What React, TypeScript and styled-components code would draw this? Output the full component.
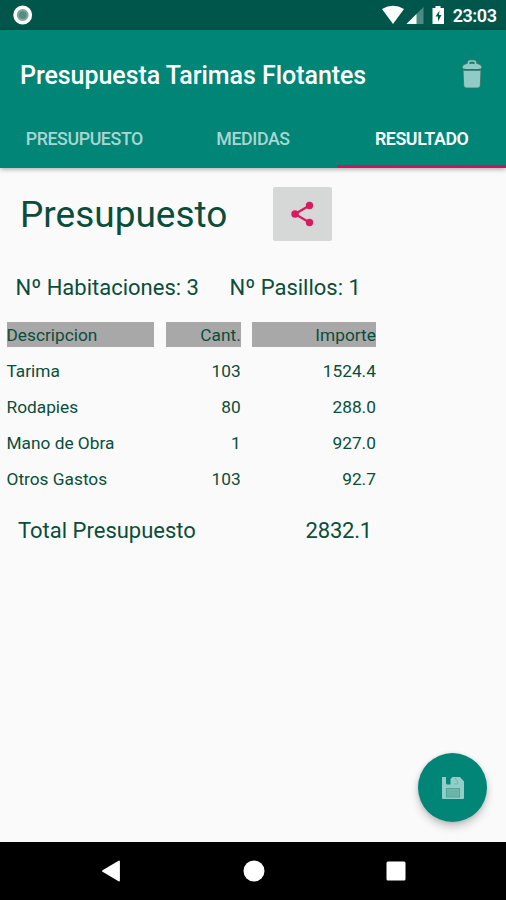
import React from "react";
import styled, { createGlobalStyle } from "styled-components";

const GlobalStyle = createGlobalStyle`
  * { box-sizing: border-box; }
  body { margin: 0; background: #fafafa; font-family: Roboto, "Noto Sans", sans-serif; }
`;

const Screen = styled.div`
  width: 506px;
  height: 900px;
  display: flex;
  flex-direction: column;
  overflow: hidden;
  background: #fafafa;
  color: #0b4d3b;
`;

const StatusBar = styled.div`
  height: 30px;
  flex: none;
  display: flex;
  align-items: center;
  justify-content: space-between;
  padding: 0 9.5px 0 13px;
  background: #00564b;
`;

const StatusIcons = styled.div`
  display: flex;
  align-items: center;
`;

const Clock = styled.span`
  color: #fff;
  font-size: 18px;
  font-weight: 600;
  letter-spacing: -0.45px;
  line-height: 30px;
  padding-top: 2px;
  margin-left: 6px;
`;

const Header = styled.header`
  height: 138px;
  flex: none;
  position: relative;
  background: #008577;
  box-shadow: 0 1px 5px rgba(0, 0, 0, 0.36);
`;

const Toolbar = styled.div`
  height: 80px;
  display: flex;
  align-items: center;
  justify-content: space-between;
  padding: 10px 23px 3px 20px;
`;

const AppTitle = styled.h1`
  margin: 0;
  padding-top: 5px;
  color: #fff;
  font-size: 25px;
  font-weight: 500;
  letter-spacing: -0.05px;
  line-height: 30px;
`;

const Tabs = styled.nav`
  height: 58px;
  display: grid;
  grid-template-columns: repeat(3, 1fr);
`;

const Tab = styled.div<{ $active?: boolean }>`
  display: flex;
  align-items: center;
  justify-content: center;
  font-size: 17.8px;
  font-weight: ${(p) => (p.$active ? 600 : 500)};
  letter-spacing: -0.4px;
  color: ${(p) => (p.$active ? "#fff" : "#a9d6d1")};
  border-bottom: 3px solid ${(p) => (p.$active ? "#d2125e" : "transparent")};
  padding-top: 2px;
`;

const Content = styled.main`
  flex: 1;
  position: relative;
`;

const TitleRow = styled.div`
  display: flex;
  align-items: center;
  gap: 45px;
  padding: 19px 0 0 20px;
`;

const Heading = styled.h2`
  margin: 0;
  width: 208px;
  font-size: 37px;
  font-weight: 400;
  line-height: 54px;
  padding-top: 1px;
  height: 54px;
  white-space: nowrap;
`;

const ShareButton = styled.button`
  width: 59px;
  height: 54px;
  border: 0;
  border-radius: 2px;
  padding: 0;
  display: flex;
  align-items: center;
  justify-content: center;
  background: #d6d8d7;
`;

const Counts = styled.div`
  display: flex;
  padding: 32px 0 0 15.5px;
  font-size: 22px;
  line-height: 30px;
`;

const Count = styled.span`
  width: 214px;
  white-space: nowrap;
`;

const Table = styled.div`
  display: grid;
  grid-template-columns: 147.5px 75px 123.5px;
  column-gap: 11.7px;
  row-gap: 11px;
  grid-auto-rows: 25px;
  padding: 19px 0 0 6.5px;
`;

const Cell = styled.span<{ $head?: boolean; $right?: boolean }>`
  font-size: 17.3px;
  line-height: 26px;
  text-align: ${(p) => (p.$right ? "right" : "left")};
  background: ${(p) => (p.$head ? "#a8a8a8" : "none")};
`;

const TotalRow = styled.div`
  width: 372px;
  display: flex;
  justify-content: space-between;
  padding: 25px 0 0 18px;
  font-size: 22px;
  line-height: 30px;
`;

const Amount = styled.span`
  letter-spacing: -0.2px;
`;

const SaveButton = styled.button`
  position: absolute;
  right: 19px;
  bottom: 20px;
  width: 69px;
  height: 69px;
  border: 0;
  padding: 0;
  border-radius: 50%;
  display: flex;
  align-items: center;
  justify-content: center;
  background: #008577;
  box-shadow: 0 5px 8px rgba(0, 0, 0, 0.2), 0 1px 4px rgba(0, 0, 0, 0.12);
`;

const NavBar = styled.footer`
  height: 58px;
  flex: none;
  display: flex;
  align-items: center;
  justify-content: space-between;
  padding: 0 100px 0 101px;
  background: #000;
`;

const RecordIcon = () => (
  <svg width="20" height="20" viewBox="0 0 20 20">
    <circle cx="9.7" cy="10" r="7.7" fill="#7da89d" stroke="#fff" strokeWidth="3.5" />
    <circle cx="9.7" cy="10" r="3.8" fill="#558d80" />
  </svg>
);

const SignalIcons = () => (
  <svg width="65" height="20" viewBox="0 0 65 20">
    <path d="M0 4Q11 -2.5 22 4L11 19Z" fill="#fff" />
    <path d="M41.5 2V19H24.5Z" fill="#4d8a81" />
    <path d="M34.5 9V19H24.5Z" fill="#fff" />
    <path d="M53.5 1h5v2h3.5v16H50.5V3h3Z" fill="#fff" />
    <path d="M57.5 5.5L53.5 11.5h2.5v5l3.500-6.500H57Z" fill="#00564b" />
  </svg>
);

const TrashIcon = () => (
  <svg width="22" height="32" viewBox="0 0 22 32">
    <path d="M7.500 6V4.500q0-2 2-2h3q2 0 2 2V6" fill="none" stroke="#347267" strokeWidth="3.200" />
    <path d="M1 9Q2 6 6 5.500h10q4 .5 5 3.500-.5 2.500-4 2.500H5Q1.500 11.500 1 9Z" fill="#91cbc5" stroke="#347267" strokeWidth=".7" />
    <path d="M7.500 6V4.500q0-1.500 1.500-1.500h4q1.500 0 1.500 1.500V6" fill="none" stroke="#91c9c3" strokeWidth="1.700" />
    <path d="M2 12h18l-.7 15.500q-.3 2.500-2.800 2.500h-11q-2.500 0-2.800-2.500Z" fill="#91cbc5" stroke="#347267" strokeWidth=".8" />
    <path d="M2.500 12h17" stroke="#286e64" strokeWidth="1.200" />
  </svg>
);

const ShareIcon = () => (
  <svg width="24" height="26" viewBox="0 0 24 26">
    <path d="M18.500 4.500L4 13L18.500 21.500" fill="none" stroke="#d81b60" strokeWidth="2.300" />
    <circle cx="18.500" cy="4.500" r="3.700" fill="#d81b60" />
    <circle cx="4" cy="13" r="3.700" fill="#d81b60" />
    <circle cx="18.500" cy="21.500" r="3.700" fill="#d81b60" />
  </svg>
);

const SaveIcon = () => (
  <svg width="22" height="23" viewBox="0 0 22 23">
    <path d="M0 1h4v6q0 1.500 1.500 1.500H8.500V3L10.500 1H18l4 4.500V22q0 1-1 1H1q-1 0-1-1Z" fill="#91cec7" />
    <path d="M13 2l2.500 3.500V8H12" fill="none" stroke="#6fb8ae" strokeWidth="1" />
    <rect x="4.500" y="12.500" width="13" height="8.500" fill="#70b5ac" stroke="#50a59a" />
    <path d="M6 15.500h10M6 18.500h10" stroke="#66b0a5" strokeWidth=".7" />
  </svg>
);

const BackIcon = () => (
  <svg width="20" height="22" viewBox="0 0 20 22">
    <path d="M18 1.500V20.500L2 11Z" fill="#fff" stroke="#fff" strokeWidth="1.800" strokeLinejoin="round" />
  </svg>
);

const HomeIcon = () => (
  <svg width="22" height="22" viewBox="0 0 22 22">
    <circle cx="11" cy="11" r="10.500" fill="#fff" />
  </svg>
);

const RecentsIcon = () => (
  <svg width="20" height="20" viewBox="0 0 20 20">
    <rect x=".5" y=".5" width="19" height="19" rx="1.500" fill="#fff" />
  </svg>
);

const rows = [
  ["Tarima", "103", "1524.4"],
  ["Rodapies", "80", "288.0"],
  ["Mano de Obra", "1", "927.0"],
  ["Otros Gastos", "103", "92.7"],
];

export default function App() {
  return (
    <>
      <GlobalStyle />
      <Screen>
        <StatusBar>
          <RecordIcon />
          <StatusIcons>
            <SignalIcons />
            <Clock>23:03</Clock>
          </StatusIcons>
        </StatusBar>
        <Header>
          <Toolbar>
            <AppTitle>Presupuesta Tarimas Flotantes</AppTitle>
            <TrashIcon />
          </Toolbar>
          <Tabs>
            <Tab>PRESUPUESTO</Tab>
            <Tab>MEDIDAS</Tab>
            <Tab $active>RESULTADO</Tab>
          </Tabs>
        </Header>
        <Content>
          <TitleRow>
            <Heading>Presupuesto</Heading>
            <ShareButton aria-label="Compartir"><ShareIcon /></ShareButton>
          </TitleRow>
          <Counts>
            <Count>Nº Habitaciones: 3</Count>
            <Count>Nº Pasillos: 1</Count>
          </Counts>
          <Table>
            <Cell $head>Descripcion</Cell>
            <Cell $head $right>Cant.</Cell>
            <Cell $head $right>Importe</Cell>
            {rows.map(([name, amount, price]) => (
              <React.Fragment key={name}>
                <Cell>{name}</Cell>
                <Cell $right>{amount}</Cell>
                <Cell $right>{price}</Cell>
              </React.Fragment>
            ))}
          </Table>
          <TotalRow>
            <span>Total Presupuesto</span>
            <Amount>2832.1</Amount>
          </TotalRow>
          <SaveButton aria-label="Guardar"><SaveIcon /></SaveButton>
        </Content>
        <NavBar>
          <BackIcon />
          <HomeIcon />
          <RecentsIcon />
        </NavBar>
      </Screen>
    </>
  );
}
